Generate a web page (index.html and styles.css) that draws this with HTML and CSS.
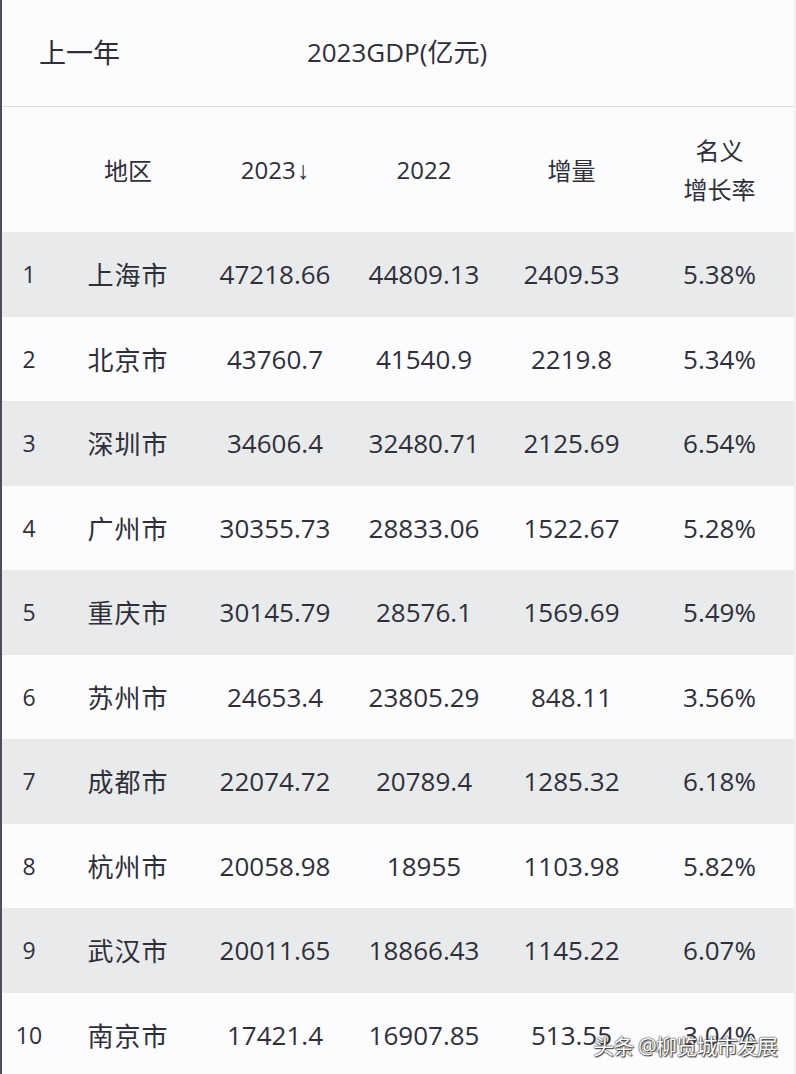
FILE: index.html
```html
<!DOCTYPE html>
<html lang="zh-CN">
<head>
<meta charset="utf-8">
<title>2023GDP</title>
<link rel="stylesheet" href="styles.css">
</head>
<body>
<div class="page">
  <div class="topbar">
    <div class="prev">上一年</div>
    <div class="title">2023GDP(亿元)</div>
    <div class="spacer"></div>
  </div>
  <div class="row head">
    <div class="c rank"></div>
    <div class="c">地区</div>
    <div class="c">2023<span class="arrow">↓</span></div>
    <div class="c">2022</div>
    <div class="c">增量</div>
    <div class="c two">名义<br>增长率</div>
  </div>
  <div class="row alt"><div class="c rank">1</div><div class="c city">上海市</div><div class="c">47218.66</div><div class="c">44809.13</div><div class="c">2409.53</div><div class="c">5.38%</div></div>
  <div class="row"><div class="c rank">2</div><div class="c city">北京市</div><div class="c">43760.7</div><div class="c">41540.9</div><div class="c">2219.8</div><div class="c">5.34%</div></div>
  <div class="row alt"><div class="c rank">3</div><div class="c city">深圳市</div><div class="c">34606.4</div><div class="c">32480.71</div><div class="c">2125.69</div><div class="c">6.54%</div></div>
  <div class="row"><div class="c rank">4</div><div class="c city">广州市</div><div class="c">30355.73</div><div class="c">28833.06</div><div class="c">1522.67</div><div class="c">5.28%</div></div>
  <div class="row alt"><div class="c rank">5</div><div class="c city">重庆市</div><div class="c">30145.79</div><div class="c">28576.1</div><div class="c">1569.69</div><div class="c">5.49%</div></div>
  <div class="row"><div class="c rank">6</div><div class="c city">苏州市</div><div class="c">24653.4</div><div class="c">23805.29</div><div class="c">848.11</div><div class="c">3.56%</div></div>
  <div class="row alt"><div class="c rank">7</div><div class="c city">成都市</div><div class="c">22074.72</div><div class="c">20789.4</div><div class="c">1285.32</div><div class="c">6.18%</div></div>
  <div class="row"><div class="c rank">8</div><div class="c city">杭州市</div><div class="c">20058.98</div><div class="c">18955</div><div class="c">1103.98</div><div class="c">5.82%</div></div>
  <div class="row alt"><div class="c rank">9</div><div class="c city">武汉市</div><div class="c">20011.65</div><div class="c">18866.43</div><div class="c">1145.22</div><div class="c">6.07%</div></div>
  <div class="row"><div class="c rank">10</div><div class="c city">南京市</div><div class="c">17421.4</div><div class="c">16907.85</div><div class="c">513.55</div><div class="c">3.04%</div></div>
  <div class="watermark">头条 @柳览城市发展</div>
</div>
</body>
</html>
```

FILE: styles.css
```css
* { box-sizing: border-box; }
html, body { margin: 0; padding: 0; background: #fcfcfe; }
body {
  font-family: "Open Sans", "Noto Sans CJK SC", sans-serif;
  color: #302f39;
}
.page {
  position: relative;
  width: 796px;
  height: 1074px;
  overflow: hidden;
  border-left: 2px solid #4d4c5c;
  border-right: 2px solid #f1f1f3;
  background: #fcfcfe;
}
.topbar {
  height: 107px;
  display: grid;
  grid-template-columns: 1fr auto 1fr;
  align-items: center;
  border-bottom: 1px solid #dedfe3;
  padding-bottom: 4px;
}
.prev {
  font-size: 27px;
  padding-left: 37px;
}
.title {
  font-size: 26px;
  padding-right: 2px;
}
.row {
  display: grid;
  grid-template-columns: 54px 144px 150px 148px 147px 1fr;
  height: 84.5px;
  align-items: center;
}
.row.head {
  height: 125px;
}
.row.alt { background: #e9eaec; }
.c {
  text-align: center;
  font-size: 26px;
  white-space: nowrap;
}
.row.head .c { font-size: 24px; }
.arrow {
  font-family: "Liberation Sans", sans-serif;
  font-size: 25px;
  margin-left: 1px;
}
.c.two { line-height: 39px; }
.c.rank { font-size: 23px; }
.c.city { font-size: 26px; letter-spacing: 1px; }
.watermark {
  position: absolute;
  left: 591px;
  top: 1030px;
  font-size: 21px;
  color: #ffffff;
  letter-spacing: -0.8px;
  text-shadow: 0 0 2px #333, 0 0 1px #333, 1px 1px 1px #444;
}
```
